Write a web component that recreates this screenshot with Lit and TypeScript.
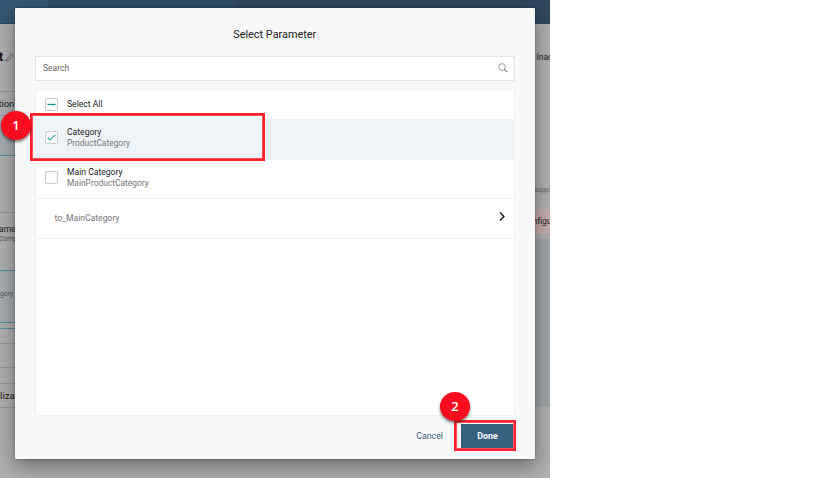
import { LitElement, html, css, svg } from "lit";
import { customElement } from "lit/decorators.js";

const check = svg`<path d="M2.7 6.6 L5 9 L10.2 3.9" fill="none" stroke="#2a9a9a" stroke-width="1.2"/>`;
const dash = svg`<path d="M2.5 6.5 H10.5" stroke="#1a9494" stroke-width="1.4"/>`;

@customElement("app-root")
export class AppRoot extends LitElement {
  static styles = css`
    :host { display: block; width: 821px; height: 478px; background: #fff; overflow: hidden; font-family: Roboto, "Noto Sans", sans-serif; }
    * { box-sizing: border-box; }
    .stage { position: relative; width: 550px; height: 478px; overflow: hidden; background: #b0b0b0; display: flex; flex-direction: column; color: #222; white-space: nowrap; }
    .shell { height: 23.5px; flex: none; background: linear-gradient(90deg, #355672 0 48px, #304c64 48px 235px, #2f475d 235px); border-bottom: 1px solid #234a66; }
    .page { flex: 1; display: flex; justify-content: space-between; min-height: 0; }
    .side { width: 15px; display: flex; flex-direction: column; }
    .right { width: 16px; }
    .side > div { flex: none; border-bottom: 1px solid #999; display: flex; align-items: center; font-size: 9.4px; }
    .side > .plain { border-bottom: 0; }
    .side > .teal { border-bottom-color: #4f8f98; }
    .tint { background: #a6acb0; }
    .h68 { height: 68px; } .h24 { height: 24px; } .h3 { height: 3px; } .h37 { height: 37px; } .h57 { height: 57px; }
    .h58 { height: 58px; } .h52 { height: 52px; } .h6 { height: 6px; } .h15 { height: 15px; } .h16 { height: 16px; }
    .side > .name { flex-direction: column; align-items: flex-start; padding-top: 11px; font-size: 8.6px; line-height: 10px; justify-content: flex-start; margin-left: -1px; }
    .side .small { font-size: 6.8px; color: #555; }
    .side > .gory { padding-bottom: 5px; }
    .side > .title { font-size: 12px; font-weight: 700; color: #111; gap: 2px; margin-left: -1px; }
    .side > .inact { height: 67px; font-size: 8.6px; padding-left: 2.5px; letter-spacing: -.1px; }
    .side > .supply { height: 118px; font-size: 7px; color: #666; align-items: flex-end; padding-bottom: 15px; letter-spacing: -.1px; }
    .side > .error { height: 25px; background: #c6adad; font-size: 8.6px; }
    .side > .fields { height: 168px; margin-top: 5px; background: #a0a4a6; }
    .side .tuck { margin-left: -1.5px; letter-spacing: -.1px; }
    .side .liza { margin-left: 0; letter-spacing: 0; font-size: 9.8px; }
    .dialog { position: absolute; left: 15px; top: 8px; width: 519.5px; height: 451px; border-radius: 1px; background: #f9f9f9; box-shadow: 0 7px 20px rgba(0,0,0,.42), 0 0 2px rgba(0,0,0,.4); padding: 0 20px; display: flex; flex-direction: column; }
    .heading { height: 47.5px; padding-top: 5px; display: flex; align-items: center; justify-content: center; font-size: 10.9px; color: #222; }
    .search { height: 25.5px; flex: none; border: 1px solid #e5e5e5; background: #fff; display: flex; align-items: center; justify-content: space-between; padding: 0 6px 0 7px; font-size: 8.5px; color: #666; }
    .list { margin: 8px 0 0; height: 327px; flex: none; background: #fff; border: 1px solid #f2f2f2; }
    .row { display: flex; align-items: center; height: 40px; padding-left: 9px; border-bottom: 1px solid #f0f0f0; font-size: 8.6px; color: #222; line-height: 11px; }
    .row svg { flex: none; }
    .row.all { height: 29px; border-bottom: 0; }
    .row.on { background: #eef3f7; height: 41px; padding-bottom: 3px; }
    .row.main { height: 39px; padding-bottom: 2.5px; }
    .row.nav { padding: 0 7.5px 2px 18.5px; justify-content: space-between; color: #777; }
    .nav span { padding-top: 1px; }
    .nav svg { margin-bottom: 2px; }
    .labels { margin-left: 9px; }
    .sub { color: #777; font-size: 8.42px; }
    .foot { display: flex; justify-content: flex-end; align-items: center; height: 40px; font-size: 8.8px; color: #3a5f80; padding-right: 1.5px; }
    .done { width: 52px; height: 25px; margin-left: 18px; padding: 0 0 0 1px; display: flex; align-items: center; justify-content: center; background: #38617f; color: #fff; font-weight: 700; }
    .frame { position: absolute; border: 3px solid #fb2029; }
    .frame::after { content: ""; position: absolute; inset: -1px; border: 1px solid #ff5057; }
    .f1 { left: 29.5px; top: 113px; width: 235.5px; height: 48px; }
    .f2 { left: 454px; top: 420px; width: 62px; height: 31px; }
    .badge { position: absolute; width: 30px; height: 29px; border-radius: 50%; background: #fb0d1f; color: #fff; font: 600 13px "Open Sans", sans-serif; display: flex; align-items: center; justify-content: center; padding-bottom: 1px; box-shadow: 0 2px 3px rgba(0,0,0,.5); }
    .b1 { left: 1px; top: 111px; }
    .b2 { left: 440px; top: 392px; }
  `;

  box(mark: unknown) {
    return html`<svg width="13" height="13" viewBox="0 0 13 13"><rect x=".6" y=".6" width="11.8" height="11.8" rx=".5" fill="#fff" stroke="#c8c8c8"/>${mark}</svg>`;
  }

  render() {
    return html`<div class="stage">
      <div class="shell"></div>
      <div class="page">
        <div class="side">
          <div class="h68 title"><span>t</span><svg width="9" height="9" viewBox="0 0 9 9"><path d="M.8 8.2 L1.4 6 L6.7.8 L8.3 2.4 L3 7.5 Z" fill="none" stroke="#555" stroke-width=".8"/></svg></div>
          <div class="h24"><span class="tuck">tion</span></div>
          <div class="h3 plain"></div>
          <div class="h37 tint teal"></div>
          <div class="h57"></div>
          <div class="h58 name teal"><span>ame</span><span class="small">Comp</span></div>
          <div class="h52 tint teal gory"><span class="small">gory</span></div>
          <div class="h6 teal"></div>
          <div class="h15"></div>
          <div class="h24"></div>
          <div class="h16"></div>
          <div class="h24"><span class="tuck liza">liza</span></div>
        </div>
        <div class="side right">
          <div class="inact plain">Inac</div>
          <div class="supply plain">suppl</div>
          <div class="error plain"><span class="tuck">nfigu</span></div>
          <div class="fields plain"></div>
        </div>
      </div>
      <div class="dialog">
        <div class="heading">Select Parameter</div>
        <div class="search"><span>Search</span><svg width="10" height="10" viewBox="0 0 10 10" fill="none" stroke="#777"><circle cx="4" cy="4" r="3.3" stroke-width=".7"/><path d="M6.3 6.3 L9.2 9.2" stroke-width="1.2"/></svg></div>
        <div class="list">
          <div class="row all">${this.box(dash)}<div class="labels">Select All</div></div>
          <div class="row on">${this.box(check)}<div class="labels"><div>Category</div><div class="sub">ProductCategory</div></div></div>
          <div class="row main">${this.box("")}<div class="labels"><div>Main Category</div><div class="sub">MainProductCategory</div></div></div>
          <div class="row nav"><span>to_MainCategory</span><svg width="8" height="10" viewBox="0 0 8 10"><path d="M2 .5 L6 4.5 L2 8.5" fill="none" stroke="#111" stroke-width="1.3"/></svg></div>
        </div>
        <div class="foot"><span>Cancel</span><div class="done">Done</div></div>
      </div>
      <div class="frame f1"></div><div class="frame f2"></div>
      <div class="badge b1">1</div><div class="badge b2">2</div>
    </div>`;
  }
}
